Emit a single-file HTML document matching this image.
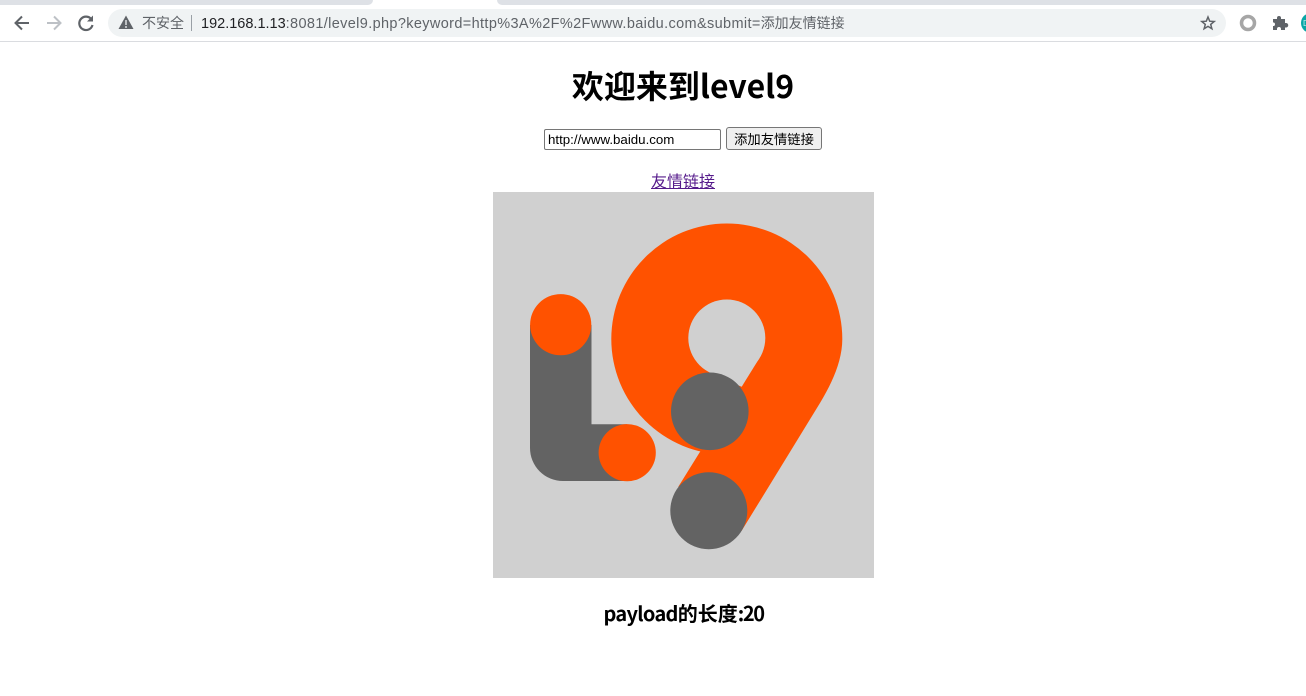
<!DOCTYPE html>
<html><head><meta charset="utf-8"><style>
html,body{margin:0;padding:0;width:1306px;height:696px;overflow:hidden;background:#fff}
body{position:relative;font-family:"Liberation Sans","Noto Sans CJK SC",sans-serif}
.a{position:absolute;white-space:nowrap}
</style></head><body>
<div class="a" style="left:0;top:0;width:373px;height:5px;background:#dee1e6;border-bottom-right-radius:5px"></div>
<div class="a" style="left:497px;top:0;width:809px;height:5px;background:#dee1e6;border-bottom-left-radius:5px"></div>
<div class="a" style="left:0;top:41px;width:1306px;height:1px;background:#dadce0"></div>
<div class="a" style="left:108px;top:9px;width:1118px;height:28px;border-radius:14px;background:#f0f3f4"></div>
<svg class="a" style="left:0;top:0" width="1306" height="42" viewBox="0 0 1306 42" fill="none">
<path d="M29 23H16M22 16.500L15.500 23L22 29.500" stroke="#5f6368" stroke-width="2"/>
<path d="M47 23H60M54 16.500L60.500 23L54 29.500" stroke="#bdc1c6" stroke-width="2"/>
<path d="M91.500 19.500A6.700 6.700 0 1 0 92.500 25" stroke="#5f6368" stroke-width="2.200"/>
<path d="M93 15.500V21.500H87Z" fill="#5f6368"/>
<path d="M126 15.500L133.500 29H118.500Z" fill="#5f6368"/>
<path d="M126 20V25M126 26V28" stroke="#f0f3f4" stroke-width="1.300"/>
<path d="M191.500 15V31" stroke="#9aa0a6"/>
<path d="M1208 17L1209.700 21.200L1214.200 21.500L1210.700 24.400L1211.900 28.800L1208 26.400L1204.100 28.800L1205.300 24.400L1201.800 21.500L1206.300 21.200Z" stroke="#5f6368" stroke-width="1.500"/>
<circle cx="1248" cy="23" r="6.500" stroke="#a6a6a6" stroke-width="3.500"/>
<path d="M1273 19H1277V18A2 2 0 0 1 1281 18V19H1285V23H1286A2 2 0 0 1 1286 27.500H1285V30H1281V29A2 2 0 0 0 1277 29V30H1273V26H1274A2 2 0 0 0 1274 22.500H1273Z" fill="#5f6368"/>
<circle cx="1311" cy="23" r="10" fill="#0aa6a6"/>
<text x="1303" y="26" font-size="8" font-family="Liberation Sans, sans-serif" fill="#bfeeee">D</text>
</svg>
<div class="a" style="left:142px;top:14px;font-size:14px;line-height:18px;color:#5f6368">不安全</div>
<div class="a" style="left:201px;top:14px;font-size:14.500px;line-height:18px;color:#5f6368"><span style="color:#202124">192.168.1.13</span><span style="letter-spacing:.36px">:8081/level9.php?keyword=http%3A%2F%2Fwww.baidu.com&amp;submit=</span><span style="font-size:14px">添加友情链接</span></div>
<div class="a" style="left:0;width:1366px;top:63px;text-align:center;font-family:'Noto Sans CJK SC',sans-serif;font-size:32px;line-height:44px;font-weight:bold;color:#000">欢迎来到level9</div>
<div class="a" style="left:544px;top:129px;width:177px;height:21px;box-sizing:border-box;border:1px solid #767676;border-radius:2px;background:#fff;font-size:13.300px;line-height:19px;padding-left:3px;color:#000">http://www.baidu.com</div>
<div class="a" style="left:726px;top:127px;width:96px;height:23px;box-sizing:border-box;border:1px solid #767676;border-radius:3px;background:#efefef;font-size:13.300px;line-height:23px;text-align:center;color:#000">添加友情链接</div>
<div class="a" style="left:651px;top:173px;font-size:16px;line-height:20px;color:#551a8b;text-decoration:underline">友情链接</div>
<svg class="a" style="left:493px;top:192px" width="381" height="386" viewBox="493 192 381 386">
<rect x="493" y="192" width="381" height="386" fill="#d0d0d0"/>
<path d="M530 325H591.500V424.300H627V481H563A33 33 0 0 1 530 448Z" fill="#636363"/>
<circle cx="560.700" cy="324.700" r="30.600" fill="#ff5200"/>
<circle cx="627.200" cy="452.700" r="28.600" fill="#ff5200"/>
<path d="M726.800 454.500A115.500 115.500 0 0 1 726.800 223.500A115.500 115.500 0 0 1 842.300 339C842.300 361 832 383 820 403L741.500 531L678.300 486.700L703 447Z" fill="#ff5200"/>
<circle cx="726.800" cy="338" r="38.500" fill="#d0d0d0"/>
<path d="M759.500 358L741.700 386.700L715 376L726.800 338Z" fill="#d0d0d0"/>
<circle cx="709.800" cy="411.300" r="38.800" fill="#636363"/>
<circle cx="708.800" cy="510.700" r="38.500" fill="#636363"/>
</svg>
<div class="a" style="left:603.500px;top:600px;font-family:'Noto Sans CJK SC',sans-serif;font-size:20px;line-height:26px;font-weight:bold;color:#000"><span style="letter-spacing:-.7px">payload</span>的长度<span style="letter-spacing:-1.4px">:20</span></div>
</body></html>
